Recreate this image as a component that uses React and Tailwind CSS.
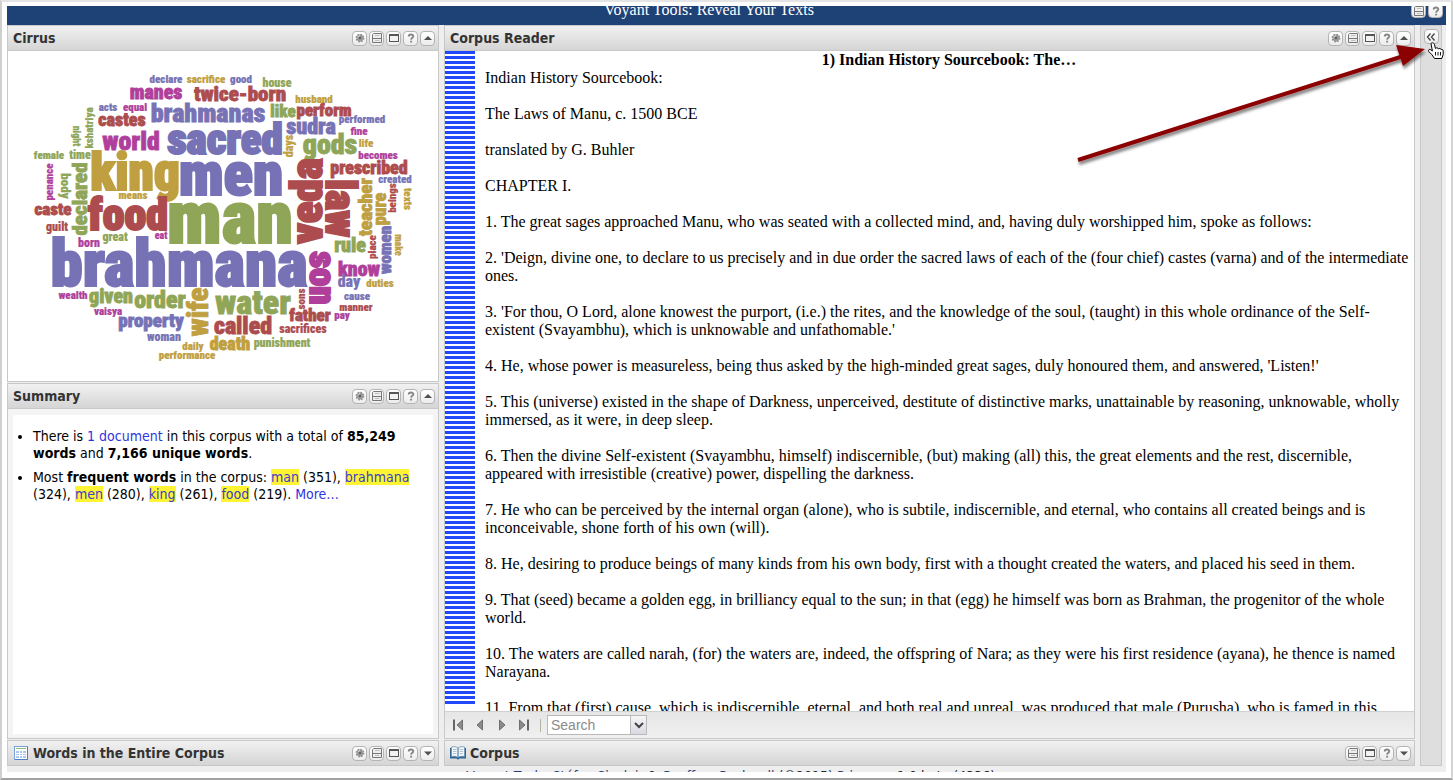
import React from "react";

const PURPLE = "#7672b5";
const GREEN = "#8fa557";
const RED = "#ad4c4e";
const GOLD = "#bf9f3f";
const PINK = "#b03f9b";

// [word, x of its middle, baseline y, font size, colour]
const ACROSS = [
  ["declare", 166, 83, 11, PURPLE], ["sacrifice", 206, 83, 11, GOLD], ["good", 241, 83, 11, PURPLE],
  ["house", 277, 87, 12, GREEN], ["manes", 156, 99, 20, PINK], ["twice-born", 240, 101, 21, RED],
  ["husband", 314, 103, 11, GOLD], ["acts", 108, 111, 11, PURPLE], ["equal", 135, 111, 11, PINK],
  ["brahmanas", 208, 122, 26, PURPLE], ["like", 283, 117, 17, GREEN], ["perform", 324, 116, 17, RED],
  ["castes", 122, 126, 18, RED], ["sudra", 311, 134, 22, PURPLE], ["performed", 362, 123, 11, PURPLE],
  ["fine", 359, 135, 11, PINK], ["world", 131, 150, 26, PINK], ["sacred", 225, 154, 43, PURPLE],
  ["gods", 330, 154, 28, GREEN], ["life", 366, 147, 11, GOLD], ["becomes", 378, 159, 11, PINK],
  ["female", 49, 159, 11, GREEN], ["time", 80, 159, 12, GREEN], ["king", 135, 190, 51, GOLD],
  ["men", 231, 195, 61, PURPLE], ["prescribed", 369, 174, 18, RED], ["created", 395, 183, 11, PURPLE],
  ["means", 133, 199, 11, GOLD], ["caste", 53, 215, 17, RED], ["food", 128, 230, 44, RED],
  ["man", 230, 243, 74, GREEN], ["guilt", 57, 231, 12, RED], ["great", 115, 241, 12, GREEN],
  ["eat", 161, 239, 10, PINK], ["born", 89, 247, 12, PINK], ["brahmana", 179, 286, 65, PURPLE],
  ["rule", 350, 252, 20, GREEN], ["know", 359, 276, 20, PINK], ["day", 349, 287, 16, PURPLE],
  ["duties", 380, 287, 11, GOLD], ["wealth", 73, 299, 11, PINK], ["given", 111, 303, 20, GREEN],
  ["order", 160, 308, 24, GREEN], ["water", 253, 314, 34, GREEN], ["cause", 357, 300, 11, PURPLE],
  ["manner", 356, 311, 11, RED], ["pay", 342, 319, 11, PINK], ["vaisya", 108, 315, 11, PINK],
  ["property", 151, 327, 19, PURPLE], ["called", 243, 334, 24, RED], ["father", 310, 321, 17, RED],
  ["sacrifices", 303, 333, 12, RED], ["woman", 164, 341, 12, PURPLE], ["death", 230, 350, 18, GOLD],
  ["punishment", 282, 347, 12, GREEN], ["daily", 193, 350, 11, GOLD], ["performance", 187, 359, 11, GOLD],
];

// [word, baseline x, y of its middle, font size, colour]
const UPWARD = [
  ["kshatriya", 93, 128, 11, GREEN], ["penance", 53, 182, 11, PINK], ["declared", 87, 199, 21, GREEN],
  ["days", 293, 146, 12, GOLD], ["veda", 322, 201, 45, RED], ["wife", 208, 312, 29, GOLD],
  ["teacher", 372, 207, 19, GOLD], ["pure", 386, 209, 18, GOLD], ["beings", 396, 198, 11, RED],
  ["women", 391, 250, 17, PURPLE], ["place", 376, 247, 11, RED], ["sons", 305, 299, 11, RED],
];

const DOWNWARD = [
  ["night", 73, 136, 10, GREEN], ["body", 61, 186, 13, GREEN], ["law", 326, 208, 43, RED],
  ["son", 310, 278, 37, PINK], ["make", 395, 245, 10, GOLD], ["texts", 404, 199, 11, GOLD],
];

function CloudWord({ word, turn }) {
  const [text, x, y, size, color] = word;
  return (
    <text
      fill={color}
      stroke={color}
      strokeWidth={size > 36 ? 2 : size > 16 ? 0.8 : 0.2}
      fontSize={size}
      textAnchor="middle"
      transform={`translate(${x} ${y}) rotate(${turn})`}
    >
      {text}
    </text>
  );
}

function WordCloud() {
  return (
    <svg
      className="h-[330px] w-full font-['Roboto_Condensed',Roboto,sans-serif] font-black"
      viewBox="8 51 430 330"
      role="img"
      aria-label="Word cloud"
    >
      {ACROSS.map((w) => <CloudWord key={w[0]} word={w} turn={0} />)}
      {UPWARD.map((w) => <CloudWord key={w[0]} word={w} turn={-90} />)}
      {DOWNWARD.map((w) => <CloudWord key={w[0]} word={w} turn={90} />)}
    </svg>
  );
}

const GLYPHS = {
  options: (
    <g>
      <circle cx="7" cy="7" r="3.4" fill="none" stroke="#8a8a8a" strokeWidth="2" strokeDasharray="1.5 1.17" />
      <circle cx="7" cy="7" r="3.4" fill="#999" />
      <circle cx="7" cy="7" r="1.2" fill="#606060" />
      <path d="M4.6 6.2 L7 4.4" stroke="#d6d6d6" />
    </g>
  ),
  save: (
    <g fill="none" stroke="#777">
      <path d="M3.5 2.5 H11.5 V11.5 H2.5 V3.5 Z" fill="#eee" />
      <path d="M3 7.5 H11" stroke="#777" />
      <path d="M5 4.5 H9.5 M5 9.5 H9.5" stroke="#c0c0c0" />
    </g>
  ),
  window: (
    <g>
      <rect x="2.5" y="3.5" width="9" height="7" fill="#f2f2f2" stroke="#555" />
      <path d="M2 4 H12" stroke="#555" strokeWidth="2" />
    </g>
  ),
  help: <path d="M4.7 5.4 C4.7 2.8 9.4 2.8 9.3 5.3 C9.2 6.9 7.2 6.8 7.1 8.6 M7.1 9.8 V11.6" fill="none" stroke="#848484" strokeWidth="1.9" />,
  up: <path d="M3 9 H11 L7 5 Z" fill="#505050" />,
  down: <path d="M3 5.5 H11 L7 9.5 Z" fill="#505050" />,
  collapse: <path d="M6.5 3.5 L3.5 7 L6.5 10.5 M10.5 3.5 L7.5 7 L10.5 10.5" fill="none" stroke="#444" strokeWidth="1.3" />,
};

function Tool({ name }) {
  return (
    <button
      type="button"
      aria-label={name}
      className="flex size-[15px] items-center justify-center rounded-[4px] border border-[#b4b4b4] bg-linear-to-b from-white to-[#ececec]"
    >
      <svg className="size-[14px] shrink-0" viewBox="0 0 14 14">{GLYPHS[name]}</svg>
    </button>
  );
}

function PanelHeader({ title, tools, icon }) {
  return (
    <header className="flex h-[25px] shrink-0 items-center border-b border-[#c8c8c8] bg-linear-to-b from-[#f1f1f1] to-[#d5d5d5] pr-[3px] pl-[5px]">
      {icon}
      <h2 className="flex-1 text-sm font-bold text-[#333]">{title}</h2>
      <div className="flex gap-[2px]">
        {tools.map((t) => <Tool key={t} name={t} />)}
      </div>
    </header>
  );
}

function GridIcon() {
  return (
    <svg className="mr-1 ml-px size-[15px]" viewBox="0 0 15 15">
      <rect x="0.5" y="0.5" width="13" height="13" fill="#fff" stroke="#7ba3d8" />
      <path d="M2 2.5 H12" stroke="#8cc27c" />
      <rect x="2" y="5" width="10" height="7" fill="#a9c6ee" />
      <path d="M2 7.5 H12 M2 9.5 H12 M5.5 5 V12 M8.5 5 V12" stroke="#fff" />
      <path d="M13.5 1 V13.5 H1" fill="none" stroke="#4f7fc0" />
    </svg>
  );
}

function BookIcon() {
  return (
    <svg className="mr-1 h-[14px] w-4" viewBox="0 0 16 14">
      <path d="M0 2 H16 V12.5 H9.5 L8 13.8 L6.5 12.5 H0 Z" fill="#2f6596" />
      <path d="M1.5 1 C4 0.4 6.5 0.6 8 2 C9.5 0.6 12 0.4 14.5 1 V10.5 C12 10 9.5 10.2 8 11.5 C6.5 10.2 4 10 1.5 10.5 Z" fill="#f4f8fb" stroke="#6c94b6" strokeWidth="0.8" />
      <path d="M8 2 V11.5" stroke="#3c6b94" />
      <path d="M3 3.5 H6.5 M3 5.5 H6.5 M3 7.5 H6.5 M9.5 3.5 H13 M9.5 5.5 H13 M9.5 7.5 H13" stroke="#a8bccd" strokeWidth="0.9" />
    </svg>
  );
}

const ALL_TOOLS = ["options", "save", "window", "help", "up"];

function Frequent({ children }) {
  return <a href="#word" className="bg-[#fff433] text-[#3a3fc8]">{children}</a>;
}

const PARAGRAPHS = [
  "Indian History Sourcebook:",
  "The Laws of Manu, c. 1500 BCE",
  "translated by G. Buhler",
  "CHAPTER I.",
  "1. The great sages approached Manu, who was seated with a collected mind, and, having duly worshipped him, spoke as follows:",
  "2. 'Deign, divine one, to declare to us precisely and in due order the sacred laws of each of the (four chief) castes (varna) and of the intermediate ones.",
  "3. 'For thou, O Lord, alone knowest the purport, (i.e.) the rites, and the knowledge of the soul, (taught) in this whole ordinance of the Self-existent (Svayambhu), which is unknowable and unfathomable.'",
  "4. He, whose power is measureless, being thus asked by the high-minded great sages, duly honoured them, and answered, 'Listen!'",
  "5. This (universe) existed in the shape of Darkness, unperceived, destitute of distinctive marks, unattainable by reasoning, unknowable, wholly immersed, as it were, in deep sleep.",
  "6. Then the divine Self-existent (Svayambhu, himself) indiscernible, (but) making (all) this, the great elements and the rest, discernible, appeared with irresistible (creative) power, dispelling the darkness.",
  "7. He who can be perceived by the internal organ (alone), who is subtile, indiscernible, and eternal, who contains all created beings and is inconceivable, shone forth of his own (will).",
  "8. He, desiring to produce beings of many kinds from his own body, first with a thought created the waters, and placed his seed in them.",
  "9. That (seed) became a golden egg, in brilliancy equal to the sun; in that (egg) he himself was born as Brahman, the progenitor of the whole world.",
  "10. The waters are called narah, (for) the waters are, indeed, the offspring of Nara; as they were his first residence (ayana), he thence is named Narayana.",
  "11. From that (first) cause, which is indiscernible, eternal, and both real and unreal, was produced that male (Purusha), who is famed in this",
];

function PageButton({ label, children }) {
  return (
    <button type="button" aria-label={label} className="flex h-4 w-4 items-center justify-center">
      <svg className="h-[14px] w-3" viewBox="0 0 12 14" fill="#8b8b8b" stroke="#666" strokeWidth="0.9">{children}</svg>
    </button>
  );
}

function ReaderToolbar() {
  return (
    <div className="flex h-[27px] shrink-0 items-center border-t border-[#d0d0d0] bg-linear-to-b from-[#e6e6e6] to-[#f0f0f0] pl-[5px]">
      <div className="flex gap-[6px]">
        <PageButton label="First page"><path d="M2 1.5 V12.5" strokeWidth="2" /><path d="M10.5 2 V12 L5 7 Z" /></PageButton>
        <PageButton label="Previous page"><path d="M8.5 2 V12 L3 7 Z" /></PageButton>
        <PageButton label="Next page"><path d="M3.5 2 V12 L9 7 Z" /></PageButton>
        <PageButton label="Last page"><path d="M1.5 2 V12 L7 7 Z" /><path d="M10 1.5 V12.5" strokeWidth="2" /></PageButton>
      </div>
      <div className="mr-[6px] ml-2 h-[13px] w-px bg-[#b5b3a0]" />
      <div className="flex h-5 border border-[#b9b9b9] bg-white">
        <input
          aria-label="Search"
          placeholder="Search"
          className="w-[82px] px-[3px] font-['Liberation_Sans',sans-serif] text-sm outline-none placeholder:text-[#8a8a8a]"
        />
        <button type="button" aria-label="Show options" className="flex w-4 items-center justify-center border-l border-[#b9b9b9] bg-linear-to-b from-[#f6f6f6] to-[#d9d9e4]">
          <svg className="h-[7px] w-[10px] shrink-0" viewBox="0 0 10 7"><path d="M1 1 L5 5 L9 1" fill="none" stroke="#444" strokeWidth="2" /></svg>
        </button>
      </div>
    </div>
  );
}

function Pointer() {
  return (
    <svg className="pointer-events-none absolute -top-[2px] -right-[2px] h-[180px] w-[393px]" viewBox="0 0 393 180" aria-hidden="true">
      <defs>
        <filter id="soft" x="-10%" y="-10%" width="120%" height="130%">
          <feDropShadow dx="1" dy="3" stdDeviation="1.6" floodColor="#000" floodOpacity="0.5" />
        </filter>
      </defs>
      <g filter="url(#soft)" fill="#8b0000">
        <path d="M18 160 L342 56.5" stroke="#8b0000" strokeWidth="4" />
        <path d="M365 49 L336 45 L343 66 Z" />
      </g>
      <path
        d="M371 43.5 C372.5 42 374.3 43 374.6 45 L375.4 48.4 C376.6 47.4 378 47.8 378.4 49 C379.4 48 380.8 48.4 381.2 49.6 C382.2 49 383 49.6 383.2 51 L383.2 54.5 L381.8 58.5 L374.5 58.5 L372 54.8 L368.8 51.6 C367.8 50 369.4 48.8 370.8 49.8 L372.4 51 Z"
        fill="#fff" stroke="#000" strokeWidth="1"
      />
      <path d="M375.5 52 V55.5 M378 52 V55.5 M380.5 52 V55.5" stroke="#000" strokeWidth="0.9" />
    </svg>
  );
}

export default function App() {
  return (
    <div className="relative flex h-screen flex-col overflow-hidden border-t-2 border-r-2 border-b-2 border-l-2 border-t-[#e4e4e4] border-r-[#d4d4d4] border-b-[#a0a0a0] border-l-[#cfcfcf] bg-white px-[5px] pt-1 pb-[6px] font-['DejaVu_Sans_Condensed','DejaVu_Sans',sans-serif]">
      <div className="flex min-h-0 flex-1 flex-col overflow-hidden bg-[#eeeeee]">
        <div className="flex h-[19px] shrink-0 items-end overflow-hidden bg-[#1f4276] pl-px">
          <h1 className="flex-1 pb-[6px] text-center font-['Liberation_Serif',serif] text-base leading-[18px] text-white">Voyant Tools: Reveal Your Texts</h1>
          <div className="flex w-9 justify-end gap-[2px] pr-[3px] pb-[7px]">
            <Tool name="save" />
            <Tool name="help" />
          </div>
        </div>

        <div className="grid min-h-0 flex-1 grid-cols-[432px_minmax(0,1fr)_22px] gap-[5px] pr-1">
          <div className="flex min-h-0 flex-col gap-px">
            <section className="shrink-0 border border-[#c8c8c8] bg-white">
              <PanelHeader title="Cirrus" tools={ALL_TOOLS} />
              <WordCloud />
            </section>
            <section className="flex min-h-0 flex-1 flex-col border border-[#c8c8c8] bg-[#f4f4f4]">
              <PanelHeader title="Summary" tools={ALL_TOOLS} />
              <div className="mx-[5px] mt-[6px] mb-1 flex-1 bg-white">
                <ul className="list-disc space-y-[7px] pt-[13px] pr-[18px] pl-5 text-sm leading-[17px] text-black">
                  <li>
                    There is <a href="#documents" className="text-[#2f35dd]">1 document</a> in this corpus with a total of <b>85,249 words</b> and <b>7,166 unique words</b>.
                  </li>
                  <li>
                    Most <b>frequent words</b> in the corpus: <Frequent>man</Frequent> (351), <Frequent>brahmana</Frequent> (324), <Frequent>men</Frequent> (280), <Frequent>king</Frequent> (261), <Frequent>food</Frequent> (219). <a href="#more" className="text-[#2f35dd]">More…</a>
                  </li>
                </ul>
              </div>
            </section>
            <section className="shrink-0 border border-b-0 border-[#c8c8c8]">
              <PanelHeader title="Words in the Entire Corpus" icon={<GridIcon />} tools={["options", "save", "window", "help", "down"]} />
            </section>
          </div>

          <div className="flex min-h-0 flex-col gap-px">
            <section className="flex min-h-0 flex-1 flex-col border border-[#c8c8c8] bg-white">
              <PanelHeader title="Corpus Reader" tools={ALL_TOOLS} />
              <div className="flex min-h-0 flex-1 overflow-hidden">
                <div className="mb-[7px] w-[30px] shrink-0 bg-[repeating-linear-gradient(to_bottom,#2148fb_0px,#2148fb_3px,#ffffff_3px,#ffffff_5px)]" />
                <article className="min-w-0 flex-1 pr-px pl-[10px] font-['Liberation_Serif',serif] text-base leading-[18px] text-black">
                  <h3 className="text-center font-bold">1) Indian History Sourcebook: The…</h3>
                  <div className="space-y-[18px] pr-px">
                    {PARAGRAPHS.map((p) => <p key={p}>{p}</p>)}
                  </div>
                </article>
              </div>
              <ReaderToolbar />
            </section>
            <section className="shrink-0 border border-b-0 border-[#c8c8c8]">
              <PanelHeader title="Corpus" icon={<BookIcon />} tools={["save", "window", "help", "down"]} />
            </section>
          </div>

          <aside className="flex items-start justify-center border border-[#c8c8c8] bg-[#dedede] pt-[3px]">
            <Tool name="collapse" />
          </aside>
        </div>

        <footer className="mt-[3px] flex h-[3px] shrink-0 justify-center overflow-hidden text-sm leading-[14px] whitespace-nowrap text-[#222]">
          <p>
            - <a href="#voyant" className="text-[#1f4276]">Voyant Tools</a>, <a href="#sinclair" className="text-[#1f4276]">Stéfan Sinclair</a> &amp; <a href="#rockwell" className="text-[#1f4276]">Geoffrey Rockwell</a> (©2015) <a href="#privacy" className="text-[#1f4276]">Privacy</a> v.1.0 beta (4336)
          </p>
        </footer>
      </div>
      <Pointer />
    </div>
  );
}
